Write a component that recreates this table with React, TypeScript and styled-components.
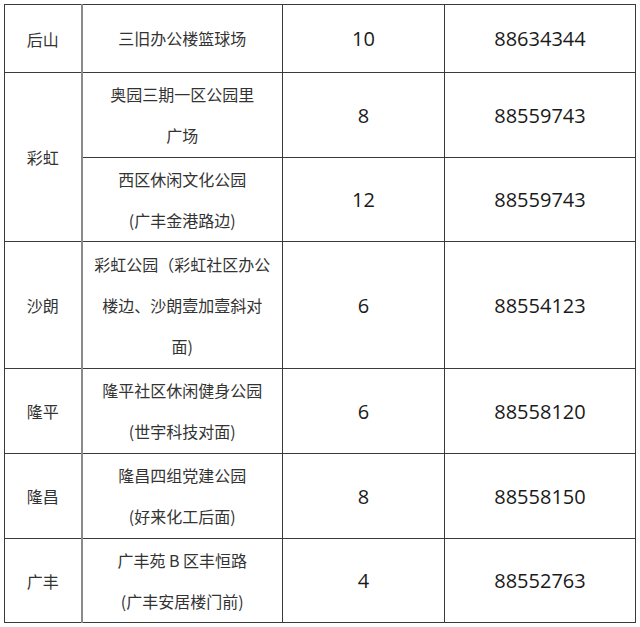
import React from 'react';
import styled, { createGlobalStyle } from 'styled-components';

type Row = {
  area?: string;
  span?: number;
  place: string[];
  count: string;
  phone: string;
  height: number;
};

const widths = [77, 201, 162, 191];

const rows: Row[] = [
  { area: '后山', span: 1, place: ['三旧办公楼篮球场'], count: '10', phone: '88634344', height: 68 },
  { area: '彩虹', span: 2, place: ['奥园三期一区公园里', '广场'], count: '8', phone: '88559743', height: 85 },
  { place: ['西区休闲文化公园', '(广丰金港路边)'], count: '12', phone: '88559743', height: 84 },
  { area: '沙朗', span: 1, place: ['彩虹公园（彩虹社区办公', '楼边、沙朗壹加壹斜对', '面)'], count: '6', phone: '88554123', height: 127 },
  { area: '隆平', span: 1, place: ['隆平社区休闲健身公园', '(世宇科技对面)'], count: '6', phone: '88558120', height: 85 },
  { area: '隆昌', span: 1, place: ['隆昌四组党建公园', '(好来化工后面)'], count: '8', phone: '88558150', height: 85 },
  { area: '广丰', span: 1, place: ['广丰苑 B 区丰恒路', '(广丰安居楼门前)'], count: '4', phone: '88552763', height: 84 },
];

export default function App() {
  return (
    <>
      <GlobalStyle />
      <Page>
        <Table>
          <colgroup>
            {widths.map((w, i) => (
              <Col key={i} $w={w} />
            ))}
          </colgroup>
          <tbody>
            {rows.map((r, i) => (
              <Tr key={i} $h={r.height}>
                {r.area && <AreaCell rowSpan={r.span}>{r.area}</AreaCell>}
                <PlaceCell>
                  {r.place.map((line, j) => (
                    <Line key={j}>{line}</Line>
                  ))}
                </PlaceCell>
                <NumCell>{r.count}</NumCell>
                <NumCell>{r.phone}</NumCell>
              </Tr>
            ))}
          </tbody>
        </Table>
      </Page>
    </>
  );
}

const GlobalStyle = createGlobalStyle`
  html, body {
    margin: 0;
    padding: 0;
    background: #ffffff;
  }
`;

const Page = styled.div`
  padding: 4px 0 0 4px;
  width: 640px;
  height: 627px;
  box-sizing: border-box;
  background: #fff;
`;

const Table = styled.table`
  border-collapse: collapse;
  table-layout: fixed;
  width: 631px;
  border: 1px solid #333;
`;

const Col = styled.col<{ $w: number }>`
  width: ${(p) => p.$w}px;
`;

const Tr = styled.tr<{ $h: number }>`
  height: ${(p) => p.$h}px;
`;

const Cell = styled.td`
  border: 1px solid #3a3a3a;
  padding: 0;
  text-align: center;
  vertical-align: middle;
`;

const AreaCell = styled(Cell)`
  border-right: 2px solid #8a8a8a;
  font-family: "Noto Sans CJK SC", "Noto Sans", sans-serif;
  font-size: 16px;
  color: #333;
`;

const PlaceCell = styled(Cell)`
  font-family: "Noto Sans CJK SC", "Noto Sans", sans-serif;
  font-size: 16px;
  color: #333;
`;

const Line = styled.div`
  line-height: 41px;
  white-space: nowrap;
`;

const NumCell = styled(Cell)`
  font-family: "Open Sans", "Noto Sans", sans-serif;
  font-size: 20px;
  color: #1a1a1a;
`;
